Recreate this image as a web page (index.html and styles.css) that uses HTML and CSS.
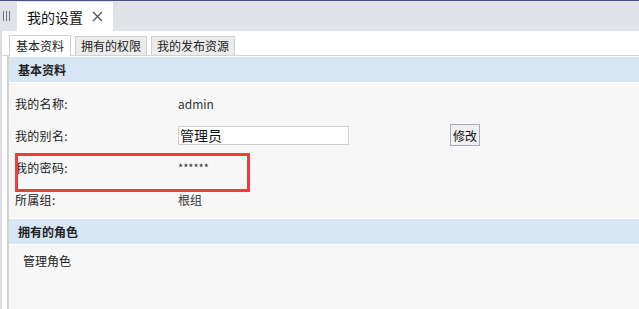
FILE: index.html
```html
<!DOCTYPE html>
<html lang="zh-CN">
<head>
  <meta charset="UTF-8">
  <title>我的设置</title>
  <link rel="stylesheet" href="styles.css">
</head>
<body>
  <div class="tabstrip">
    <span class="grip"><i></i><i></i><i></i></span>
    <div class="main-tab">
      <span>我的设置</span>
      <svg class="close" width="11" height="11" viewBox="0 0 11 11">
        <path d="M1 1L10 10M10 1L1 10" stroke="#555" stroke-width="1.3" fill="none"/>
      </svg>
    </div>
  </div>

  <div class="page">
    <div class="subtabs">
      <span class="subtab active">基本资料</span>
      <span class="subtab">拥有的权限</span>
      <span class="subtab">我的发布资源</span>
    </div>

    <div class="panel">
      <div class="section-title">基本资料</div>
      <div class="rows">
        <div class="row">
          <span class="label">我的名称:</span>
          <span class="value">admin</span>
        </div>
        <div class="row">
          <span class="label">我的别名:</span>
          <input class="alias" type="text" value="管理员">
          <button class="btn">修改</button>
        </div>
        <div class="row">
          <span class="label">我的密码:</span>
          <span class="value stars">******</span>
        </div>
        <div class="row">
          <span class="label">所属组:</span>
          <span class="value">根组</span>
        </div>
      </div>

      <div class="section-title">拥有的角色</div>
      <div class="roles">管理角色</div>
    </div>
  </div>

  <div class="highlight"></div>
</body>
</html>
```

FILE: styles.css
```css
* {
  box-sizing: border-box;
}

html, body {
  height: 100%;
}

body {
  margin: 0;
  font-family: "Noto Sans CJK SC", "Noto Sans", sans-serif;
  font-size: 12px;
  color: #222;
  background: #fff;
  border-top: 1px solid #44548a;
  display: flex;
  flex-direction: column;
  position: relative;
  overflow: hidden;
}

.tabstrip {
  height: 30px;
  background: #e1e1ea;
  display: flex;
  align-items: flex-end;
}

.grip {
  width: 17px;
  height: 30px;
  display: flex;
  align-items: center;
  gap: 2px;
  padding-left: 3px;
}

.grip i {
  width: 1px;
  height: 10px;
  background: #777;
}

.main-tab {
  height: 29px;
  width: 96px;
  background: #fff;
  display: flex;
  align-items: center;
  padding-left: 10px;
  gap: 9px;
  font-size: 14px;
  color: #111;
}

.page {
  flex: 1;
  display: flex;
  flex-direction: column;
  border-left: 2px solid #dcdce8;
}

.subtabs {
  height: 25px;
  display: flex;
  align-items: flex-end;
  gap: 4px;
  padding-left: 7px;
  border-bottom: 1px solid #d4d4d4;
}

.subtab {
  height: 19px;
  padding: 0 5px;
  line-height: 17px;
  background: #ececec;
  border: 1px solid #cfcfcf;
  border-bottom: none;
}

.subtab.active {
  height: 21px;
  line-height: 19px;
  background: #fff;
  margin-bottom: -1px;
  padding: 0 6px;
}

.panel {
  flex: 1;
  background: #f7f7f7;
  margin-left: 5px;
  border-left: 2px solid #d4d4d4;
}

.section-title {
  height: 27px;
  line-height: 25px;
  background: #d6e6f5;
  padding-left: 9px;
  font-weight: bold;
  border-top: 1px solid #fff;
  border-bottom: 1px solid #fff;
}

.rows {
  padding: 4px 0 3px;
}

.row {
  height: 32px;
  display: flex;
  align-items: center;
  padding-left: 6px;
}

.label {
  width: 163px;
  letter-spacing: 0.3px;
}

.value {
  color: #333;
}

.stars {
  font-size: 11px;
}

.alias {
  width: 171px;
  height: 19px;
  border: 1px solid #d0d0d0;
  background: #fff;
  font: inherit;
  font-size: 14px;
  padding: 0 1px;
  color: #111;
}

.btn {
  margin-left: 101px;
  height: 22px;
  padding: 0 2px;
  font: inherit;
  font-size: 12px;
  background: #f0f0f0;
  border: 1px solid #a4acb8;
  border-radius: 0;
  color: #111;
}

.roles {
  padding: 7px 0 0 14px;
}

/* annotation box drawn over the password row */
.highlight {
  position: absolute;
  left: 15px;
  top: 152px;
  width: 235px;
  height: 39px;
  border: 3px solid #f23b3b;
}
```
